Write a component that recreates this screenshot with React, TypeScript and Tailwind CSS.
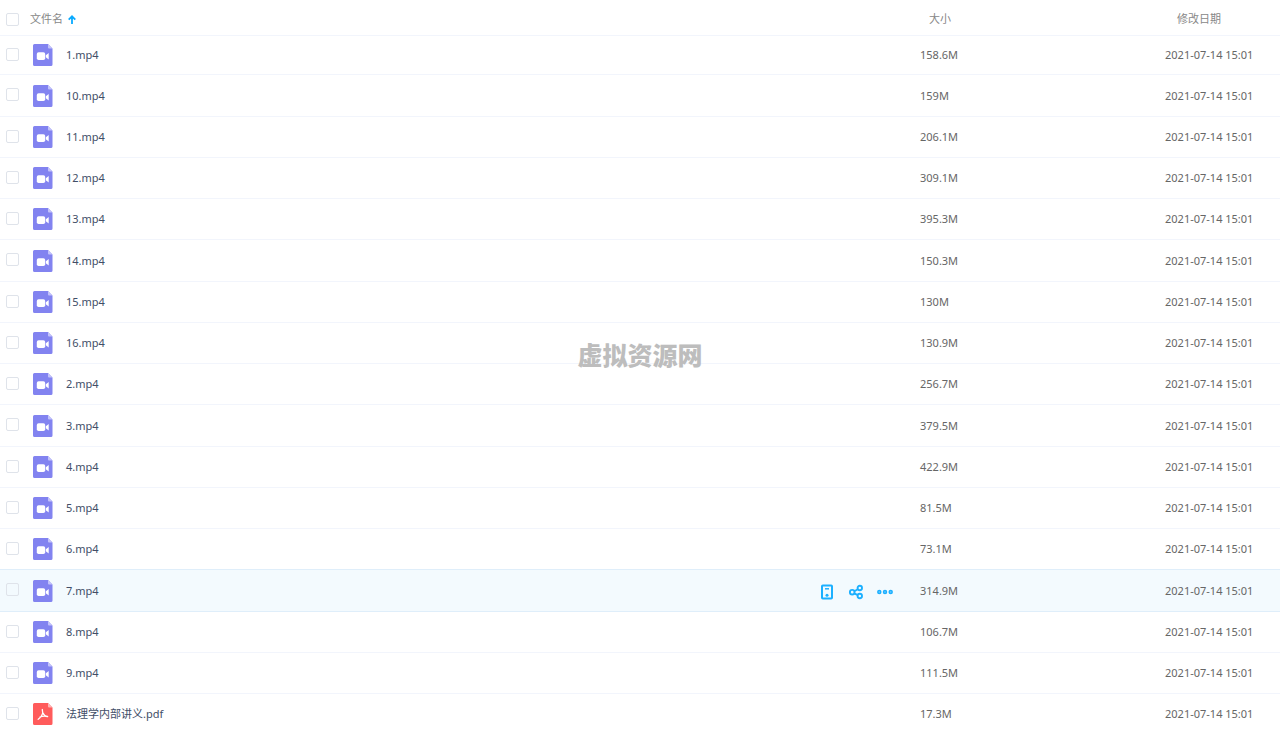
import { useState } from 'react';

type FileItem = {
  name: string;
  size: string;
  date: string;
};

const files: FileItem[] = [
  { name: '1.mp4', size: '158.6M', date: '2021-07-14 15:01' },
  { name: '10.mp4', size: '159M', date: '2021-07-14 15:01' },
  { name: '11.mp4', size: '206.1M', date: '2021-07-14 15:01' },
  { name: '12.mp4', size: '309.1M', date: '2021-07-14 15:01' },
  { name: '13.mp4', size: '395.3M', date: '2021-07-14 15:01' },
  { name: '14.mp4', size: '150.3M', date: '2021-07-14 15:01' },
  { name: '15.mp4', size: '130M', date: '2021-07-14 15:01' },
  { name: '16.mp4', size: '130.9M', date: '2021-07-14 15:01' },
  { name: '2.mp4', size: '256.7M', date: '2021-07-14 15:01' },
  { name: '3.mp4', size: '379.5M', date: '2021-07-14 15:01' },
  { name: '4.mp4', size: '422.9M', date: '2021-07-14 15:01' },
  { name: '5.mp4', size: '81.5M', date: '2021-07-14 15:01' },
  { name: '6.mp4', size: '73.1M', date: '2021-07-14 15:01' },
  { name: '7.mp4', size: '314.9M', date: '2021-07-14 15:01' },
  { name: '8.mp4', size: '106.7M', date: '2021-07-14 15:01' },
  { name: '9.mp4', size: '111.5M', date: '2021-07-14 15:01' },
  { name: '法理学内部讲义.pdf', size: '17.3M', date: '2021-07-14 15:01' },
];

const VideoIcon = () => (
  <svg className="w-5 h-[22px] shrink-0" viewBox="0 0 20 22" aria-hidden="true">
    <path d="M1.5 0H15l4.5 4.5v16a1.5 1.5 0 0 1-1.5 1.5H1.5A1.5 1.5 0 0 1 0 20.5v-19A1.5 1.5 0 0 1 1.5 0z" fill="#8283f0" />
    <path d="M15 0l4.5 4.5H16A1 1 0 0 1 15 3.5z" fill="#c3c3fa" />
    <rect x="3.8" y="8.2" width="8.4" height="7.8" rx="1.8" fill="#fff" />
    <path d="M12.8 11.2l2.9-2.2v6.400l-2.900-2.200z" fill="#fff" />
  </svg>
);

const PdfIcon = () => (
  <svg className="w-5 h-[22px] shrink-0" viewBox="0 0 20 22" aria-hidden="true">
    <path d="M1.5 0H15l4.5 4.5v16a1.5 1.5 0 0 1-1.5 1.5H1.5A1.5 1.5 0 0 1 0 20.5v-19A1.5 1.5 0 0 1 1.5 0z" fill="#ff5b5b" />
    <path d="M15 0l4.5 4.5H16A1 1 0 0 1 15 3.5z" fill="#ffb3b3" />
    <path
      d="M9.3 6.5c.8 2.5.6 4-.6 6-1 1.7-2 2.9-3.500 3.800M9.600 9.500c.9 2.300 2.500 3.700 5 4.100M7 14c2-.9 4.200-1.300 7.600-.5"
      fill="none"
      stroke="#fff"
      strokeWidth="1.3"
      strokeLinecap="round"
    />
  </svg>
);

const DeviceIcon = () => (
  <svg className="w-4 h-4" viewBox="0 0 16 16" fill="none" stroke="currentColor" strokeWidth="2" aria-hidden="true">
    <rect x="3" y="1.500" width="10" height="13" rx=".8" />
    <path d="M6 4.800h4" strokeWidth="1.500" />
    <circle cx="8" cy="11.200" r="1.500" fill="currentColor" stroke="none" />
  </svg>
);

const ShareIcon = () => (
  <svg className="w-4 h-4" viewBox="0 0 16 16" fill="none" stroke="currentColor" strokeWidth="1.900" aria-hidden="true">
    <circle cx="4.200" cy="8.200" r="2.300" />
    <circle cx="11.800" cy="4" r="2.200" />
    <circle cx="11.800" cy="12" r="2.200" />
    <path d="M6.300 7.300l3.500-2M6.300 9.300l3.500 1.800" />
  </svg>
);

const MoreIcon = () => (
  <svg className="w-4 h-4" viewBox="0 0 16 16" fill="#7fd0ff" stroke="currentColor" strokeWidth="1.500" aria-hidden="true">
    <circle cx="2.300" cy="8" r="1.500" />
    <circle cx="8" cy="8" r="1.500" />
    <circle cx="13.700" cy="8" r="1.500" />
  </svg>
);

const checkboxClass =
  'block appearance-none w-[13px] h-[13px] border border-[#dfe3ea] rounded-[2px] bg-transparent checked:bg-[#09aaff]';

const App: React.FC = () => {
  const [selected, setSelected] = useState<string[]>([]);
  const [activeName, setActiveName] = useState<string>('7.mp4');
  const [isAscending, setIsAscending] = useState<boolean>(true);

  const toggleFile = (name: string) => {
    setSelected(
      selected.includes(name)
        ? selected.filter((item) => item !== name)
        : [...selected, name]
    );
  };

  const toggleAll = () => {
    setSelected(selected.length === files.length ? [] : files.map((file) => file.name));
  };

  const rows = isAscending ? files : [...files].reverse();

  return (
    <div className="relative h-screen overflow-hidden bg-white font-['Noto_Sans','Noto_Sans_CJK_SC',sans-serif] text-[11px] leading-4">
      <table className="w-full table-fixed border-separate border-spacing-0 text-left">
        <thead>
          <tr className="h-9 text-[#888] *:border-b *:border-[#f2f5fc] *:pt-[3px]">
            <th className="w-[30px] p-0 pl-[6px]">
              <input
                type="checkbox"
                aria-label="全选"
                className={checkboxClass}
                checked={selected.length === files.length}
                onChange={toggleAll}
              />
            </th>
            <th className="p-0 font-normal">
              <button className="flex items-center gap-[5px]" onClick={() => setIsAscending(!isAscending)}>
                文件名
                <svg
                  className={isAscending ? 'w-2 h-[9px]' : 'w-2 h-[9px] rotate-180'}
                  viewBox="0 0 8 9"
                  fill="none"
                  stroke="#09aaff"
                  strokeWidth="1.8"
                  aria-hidden="true"
                >
                  <path d="M4 9V1.300M.7 4.600L4 1.300l3.300 3.300" />
                </svg>
              </button>
            </th>
            <th className="w-[245px] p-0 pl-[9px] font-normal">大小</th>
            <th className="w-[115px] p-0 pl-3 font-normal">修改日期</th>
          </tr>
        </thead>
        <tbody>
          {rows.map(({ name, size, date }) => {
            const isActive = name === activeName;
            return (
              <tr
                key={name}
                onMouseEnter={() => setActiveName(name)}
                className={
                  isActive
                    ? 'h-[41px] nth-[4n+2]:h-[42px] first:h-[39px] bg-[#f3fafe] text-[#666] *:border-b *:border-[#dfeefa] *:shadow-[0_-1px_0_#dfeefa]'
                    : 'h-[41px] nth-[4n+2]:h-[42px] first:h-[39px] text-[#666] *:border-b *:border-[#f2f5fc]'
                }
              >
                <td className="p-0 pl-[6px] pb-[2px]">
                  <input
                    type="checkbox"
                    aria-label={name}
                    className={checkboxClass}
                    checked={selected.includes(name)}
                    onChange={() => toggleFile(name)}
                  />
                </td>
                <td className="p-0">
                  <div className="flex items-center pl-[3px] pr-[27px]">
                    {name.endsWith('.pdf') ? <PdfIcon /> : <VideoIcon />}
                    <a href="#" className="ml-[13px] text-[#424e67]">
                      {name}
                    </a>
                    {isActive && (
                      <div className="ml-auto flex items-center gap-[13px] pt-[2px] text-[#1cb0ff]">
                        <button aria-label="发送到设备">
                          <DeviceIcon />
                        </button>
                        <button aria-label="分享">
                          <ShareIcon />
                        </button>
                        <button aria-label="更多">
                          <MoreIcon />
                        </button>
                      </div>
                    )}
                  </div>
                </td>
                <td className="p-0">{size}</td>
                <td className="p-0">{date}</td>
              </tr>
            );
          })}
        </tbody>
      </table>
      {/* 水印 */}
      <div className="absolute inset-0 flex items-center justify-center pb-[22px] pointer-events-none">
        <span className="font-['Noto_Sans_CJK_SC',sans-serif] text-[25px] leading-7 font-black text-[#bdbdbd]">
          虚拟资源网
        </span>
      </div>
    </div>
  );
};

export default App;
